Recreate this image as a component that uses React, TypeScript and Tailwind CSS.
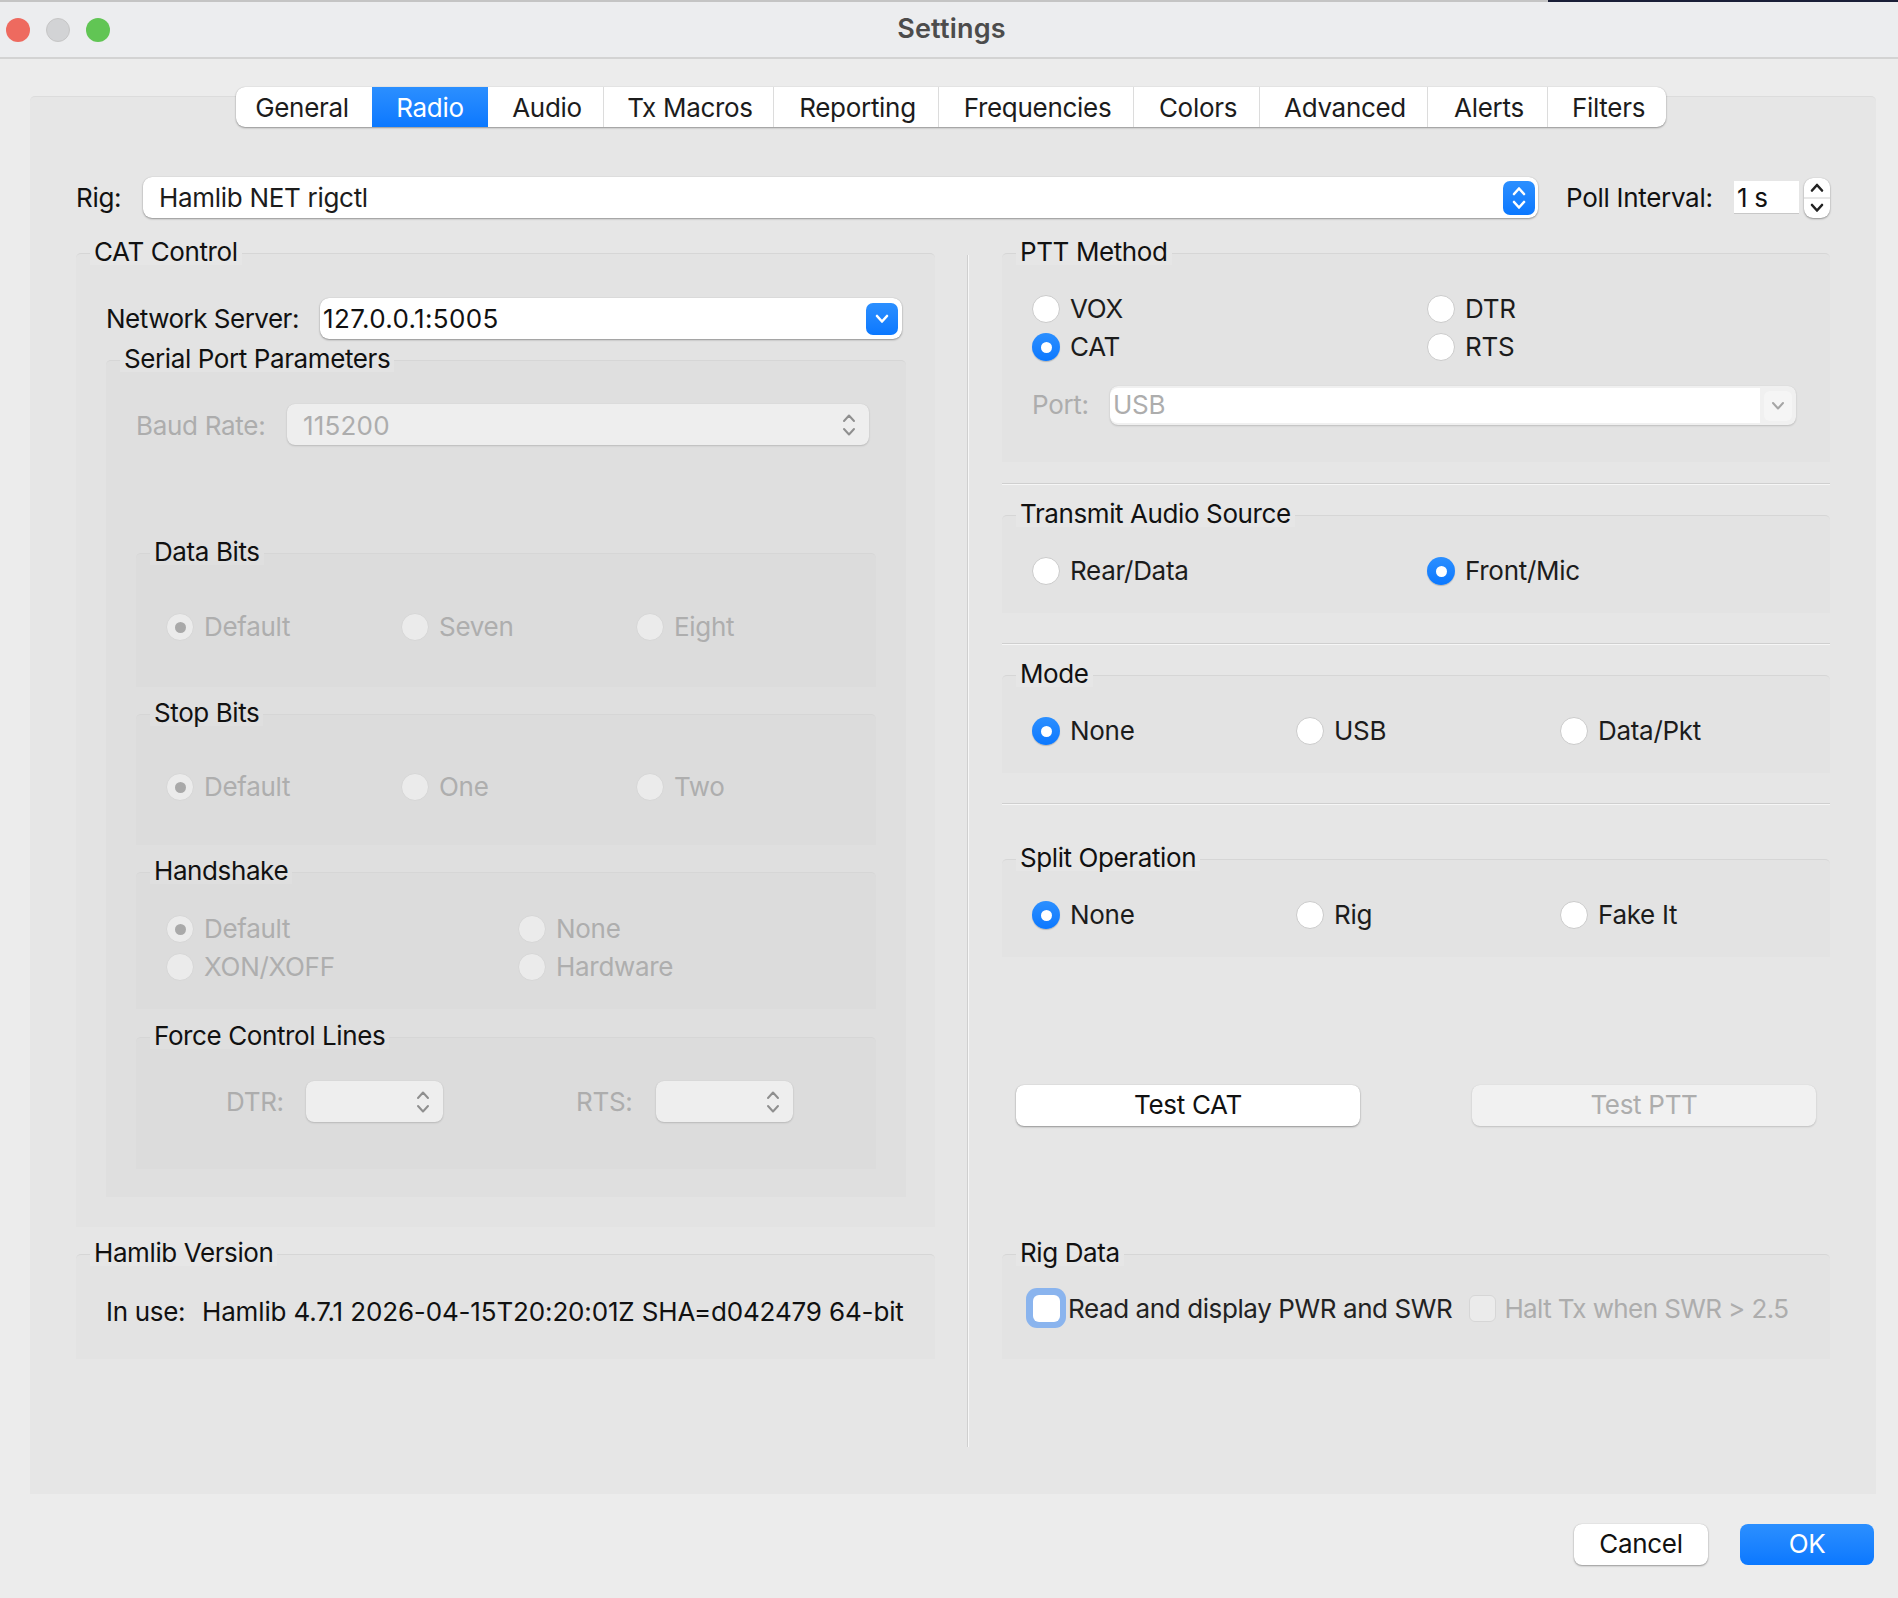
import React from 'react';

const tabs = [
  { name: 'General', w: 'w-[136px]', pad: 'pr-[4px]' },
  { name: 'Radio', w: 'w-[116px]', pad: '' },
  { name: 'Audio', w: 'w-[116px]', pad: 'pl-[3px]' },
  { name: 'Tx Macros', w: 'w-[170px]', pad: 'pl-[3px]' },
  { name: 'Reporting', w: 'w-[165px]', pad: 'pl-[3px]' },
  { name: 'Frequencies', w: 'w-[195px]', pad: 'pl-[3px]' },
  { name: 'Colors', w: 'w-[126px]', pad: 'pl-[3px]' },
  { name: 'Advanced', w: 'w-[168px]', pad: 'pl-[3px]' },
  { name: 'Alerts', w: 'w-[120px]', pad: 'pl-[3px]' },
  { name: 'Filters', w: 'w-[118px]', pad: 'pl-[3px]' },
];

const ctrlShadow = 'shadow-[0_1px_2px_rgba(0,0,0,0.35),0_0_1px_rgba(0,0,0,0.2)]';
const dimShadow = 'shadow-[0_1px_2px_rgba(0,0,0,0.16),0_0_1px_rgba(0,0,0,0.1)]';

const UpDown = ({ color = '#fff', width = 2.6 }: { color?: string; width?: number }) => (
  <svg width="16" height="26" viewBox="0 0 16 26" fill="none" stroke={color} strokeWidth={width} strokeLinecap="round" strokeLinejoin="round">
    <path d="M3 9 L8 3.5 L13 9" />
    <path d="M3 17 L8 22.5 L13 17" />
  </svg>
);

const Down = ({ color = '#fff', width = 2.6 }: { color?: string; width?: number }) => (
  <svg width="14" height="10" viewBox="0 0 14 10" fill="none" stroke={color} strokeWidth={width} strokeLinecap="round" strokeLinejoin="round">
    <path d="M2 2 L7 7.5 L12 2" />
  </svg>
);

const Radio = ({ label, checked, disabled }: { label: string; checked?: boolean; disabled?: boolean }) => (
  <div className="flex h-[38px] items-center gap-[10px]">
    {checked && !disabled ? (
      <span className="flex h-7 w-7 shrink-0 items-center justify-center rounded-full bg-gradient-to-b from-[#2b8fff] to-[#0a78ff] shadow-[0_1px_1px_rgba(0,0,0,0.2)]">
        <span className="h-[11px] w-[11px] rounded-full bg-white" />
      </span>
    ) : (
      <span
        className={`flex h-7 w-7 shrink-0 items-center justify-center rounded-full border ${
          disabled ? 'border-[#d6d6d6] bg-[#ebebeb]' : 'border-[#cbcbcb] bg-white'
        }`}
      >
        {checked && <span className="h-[11px] w-[11px] rounded-full bg-[#a9a9a9]" />}
      </span>
    )}
    <span className={`pb-[2px] ${disabled ? 'text-[#aeaeae]' : 'text-[#1c1c1c]'}`}>{label}</span>
  </div>
);

const Group = ({
  title,
  titleBg,
  bg,
  className,
  children,
}: {
  title: string;
  titleBg: string;
  bg: string;
  className: string;
  children?: React.ReactNode;
}) => (
  <div className={`relative rounded-t-[5px] border-t border-[#d6d6d6] ${bg} ${className}`}>
    <span className={`absolute left-[14px] top-[-16px] h-[27px] px-1 leading-[27px] tracking-[-0.4px] text-[#111] ${titleBg}`}>{title}</span>
    {children}
  </div>
);

const Separator = ({ className }: { className: string }) => <div className={`h-[2px] bg-[#f6f6f6] border-t border-[#cfcfcf] ${className}`} />;

const DimSelect = ({ className, value }: { className: string; value?: string }) => (
  <div className={`flex h-[41px] items-center justify-between rounded-[8px] bg-[#eeeeee] pl-[16px] pr-[12px] text-[#adadad] ${dimShadow} ${className}`}>
    <span className="pt-[1px] tracking-[0.2px]">{value}</span>
    <UpDown color="#8f8f8f" width={2} />
  </div>
);

export default function App() {
  return (
    <div className="h-[1598px] w-[1898px] overflow-hidden bg-[#ececec] text-[26px] tracking-[-0.3px] font-['Inter','Liberation_Sans',sans-serif]">
      <div className="flex h-[2px]">
        <div className="flex-1 bg-[#c4c4c4]" />
        <div className="w-[350px] bg-[#1a1f38]" />
      </div>

      {/* title bar */}
      <div className="relative flex h-[57px] items-center justify-center border-b-2 border-[#d3d3d3] bg-[#ecedef]">
        <div className="absolute left-[6px] top-[16px] flex gap-[16px]">
          <span className="h-6 w-6 rounded-full bg-[#ee6a5f]" />
          <span className="h-6 w-6 rounded-full border border-[#c6c6c6] bg-[#d2d3d5]" />
          <span className="h-6 w-6 rounded-full bg-[#61c554]" />
        </div>
        <span className="ml-[5px] text-[27px] font-semibold tracking-[0.2px] text-[#4c4c4c]">Settings</span>
      </div>

      <div className="pl-[30px] pr-[22px] pt-[28px]">
        {/* tabs */}
        <div className="relative z-10 ml-[206px] flex">
          <div className={`flex h-[40px] overflow-hidden rounded-[9px] bg-white ${ctrlShadow}`}>
            {tabs.map((t, i) => (
              <div
                key={t.name}
                className={`flex items-center justify-center pt-[1px] ${t.w} ${t.pad} ${
                  t.name === 'Radio'
                    ? 'bg-gradient-to-b from-[#2b8fff] to-[#0a78ff] text-white'
                    : `text-[#1c1c1c] ${i < tabs.length - 1 && tabs[i + 1].name !== 'Radio' ? 'border-r border-[#dcdcdc]' : ''}`
                }`}
              >
                {t.name}
              </div>
            ))}
          </div>
        </div>

        {/* tab panel */}
        <div className="-mt-[31px] h-[1398px] rounded-t-[5px] border-t border-[#dcdcdc] bg-[#e6e6e6] pl-[46px] pr-[45px] pt-[80px]">
          {/* rig row */}
          <div className="flex h-[41px] items-center whitespace-nowrap">
            <span className="w-[67px] text-[#111]">Rig:</span>
            <div className={`flex h-[41px] w-[1395px] items-center justify-between rounded-[9px] bg-white pl-[16px] pr-[3px] text-[#1c1c1c] ${ctrlShadow}`}>
              <span>Hamlib NET rigctl</span>
              <span className="flex h-[34px] w-[32px] items-center justify-center rounded-[7px] bg-gradient-to-b from-[#2b8fff] to-[#0a78ff]">
                <UpDown />
              </span>
            </div>
            <span className="ml-[28px] w-[168px] text-[#111]">Poll Interval:</span>
            <div className="flex h-[33px] w-[65px] items-center border-b border-[#c8c8c8] bg-white pl-[3px] text-[#111]">1 s</div>
            <div className={`ml-[5px] flex h-[40px] w-[26px] flex-col overflow-hidden rounded-[9px] bg-white ${ctrlShadow}`}>
              <span className="flex flex-1 rotate-180 items-center justify-center border-t border-[#d0d0d0]"><Down color="#222" /></span>
              <span className="flex flex-1 items-center justify-center"><Down color="#222" /></span>
            </div>
          </div>

          <div className="mt-[35px] flex">
            {/* left column */}
            <div className="w-[859px] shrink-0">
              <Group title="CAT Control" titleBg="bg-[#e6e6e6]" bg="bg-[#e3e3e3]" className="h-[974px] px-[30px] pt-[44px]">
                <div className="flex h-[41px] items-center">
                  <span className="w-[214px] tracking-[-0.5px] text-[#111]">Network Server:</span>
                  <div className={`flex h-[41px] w-[582px] items-center justify-between rounded-[9px] bg-white pl-[3px] pr-[4px] text-[#111] ${ctrlShadow}`}>
                    <span className="pb-[1px] tracking-[0.35px]">127.0.0.1:5005</span>
                    <span className="flex h-[32px] w-[32px] items-center justify-center rounded-[7px] bg-gradient-to-b from-[#2b8fff] to-[#0a78ff]">
                      <Down />
                    </span>
                  </div>
                </div>

                <Group title="Serial Port Parameters" titleBg="bg-[#e3e3e3]" bg="bg-[#dfdfdf]" className="mt-[21px] h-[837px] w-[800px] px-[30px] pt-[43px]">
                  <div className="flex h-[41px] items-center">
                    <span className="w-[151px] pt-[1px] text-[#adadad]">Baud Rate:</span>
                    <DimSelect className="w-[582px]" value="115200" />
                  </div>

                  <Group title="Data Bits" titleBg="bg-[#dfdfdf]" bg="bg-[#dcdcdc]" className="mt-[108px] h-[134px] w-[740px] pl-[30px] pt-[54px]">
                    <div className="grid grid-cols-[235px_235px_1fr]">
                      <Radio label="Default" checked disabled />
                      <Radio label="Seven" disabled />
                      <Radio label="Eight" disabled />
                    </div>
                  </Group>

                  <Group title="Stop Bits" titleBg="bg-[#dfdfdf]" bg="bg-[#dcdcdc]" className="mt-[27px] h-[131px] w-[740px] pl-[30px] pt-[53px]">
                    <div className="grid grid-cols-[235px_235px_1fr]">
                      <Radio label="Default" checked disabled />
                      <Radio label="One" disabled />
                      <Radio label="Two" disabled />
                    </div>
                  </Group>

                  <Group title="Handshake" titleBg="bg-[#dfdfdf]" bg="bg-[#dcdcdc]" className="mt-[27px] h-[137px] w-[740px] pl-[30px] pt-[37px]">
                    <div className="grid grid-cols-[352px_1fr]">
                      <Radio label="Default" checked disabled />
                      <Radio label="None" disabled />
                      <Radio label="XON/XOFF" disabled />
                      <Radio label="Hardware" disabled />
                    </div>
                  </Group>

                  <Group title="Force Control Lines" titleBg="bg-[#dfdfdf]" bg="bg-[#dcdcdc]" className="mt-[28px] h-[132px] w-[740px] pl-[90px] pt-[43px]">
                    <div className="flex items-center">
                      <span className="w-[80px] text-[#adadad]">DTR:</span>
                      <DimSelect className="w-[137px]" />
                      <span className="ml-[133px] w-[80px] text-[#adadad]">RTS:</span>
                      <DimSelect className="w-[137px]" />
                    </div>
                  </Group>
                </Group>
              </Group>

              <Group title="Hamlib Version" titleBg="bg-[#e6e6e6]" bg="bg-[#e3e3e3]" className="mt-[27px] h-[105px] pl-[30px] pt-[37px]">
                <div className="flex text-[#111]">
                  <span className="w-[96px]">In use:</span>
                  <span className="tracking-[-0.15px]">Hamlib 4.7.1 2026-04-15T20:20:01Z SHA=d042479 64-bit</span>
                </div>
              </Group>
            </div>

            {/* divider */}
            <div className="ml-[32px] mt-[2px] h-[1192px] w-[2px] shrink-0 bg-[#f7f7f7] border-l border-[#cfcfcf]" />

            {/* right column */}
            <div className="ml-[33px] w-[828px] shrink-0">
              <Group title="PTT Method" titleBg="bg-[#e6e6e6]" bg="bg-[#e3e3e3]" className="h-[209px] pl-[30px] pt-[36px]">
                <div className="grid grid-cols-[395px_1fr]">
                  <Radio label="VOX" />
                  <Radio label="DTR" />
                  <Radio label="CAT" checked />
                  <Radio label="RTS" />
                </div>
                <div className="mt-[20px] flex h-[39px] items-center">
                  <span className="w-[78px] pb-[2px] text-[#adadad]">Port:</span>
                  <div className={`flex h-[39px] w-[686px] items-center justify-between rounded-[8px] bg-[#f0f0f0] pr-[4px] text-[#adadad] ${dimShadow}`}>
                    <span className="flex h-[35px] flex-1 items-center rounded-l-[8px] bg-white pb-[2px] pl-[3px]">USB</span>
                    <span className="ml-[4px] flex h-[30px] w-[28px] items-center justify-center rounded-[6px] bg-[#f5f5f5]">
                      <Down color="#a5a5a5" width={2} />
                    </span>
                  </div>
                </div>
              </Group>

              <Separator className="mt-[21px]" />

              <Group title="Transmit Audio Source" titleBg="bg-[#e6e6e6]" bg="bg-[#e3e3e3]" className="mt-[30px] h-[98px] pl-[30px] pt-[36px]">
                <div className="grid grid-cols-[395px_1fr]">
                  <Radio label="Rear/Data" />
                  <Radio label="Front/Mic" checked />
                </div>
              </Group>

              <Separator className="mt-[30px]" />

              <Group title="Mode" titleBg="bg-[#e6e6e6]" bg="bg-[#e3e3e3]" className="mt-[30px] h-[98px] pl-[30px] pt-[36px]">
                <div className="grid grid-cols-[264px_264px_1fr]">
                  <Radio label="None" checked />
                  <Radio label="USB" />
                  <Radio label="Data/Pkt" />
                </div>
              </Group>

              <Separator className="mt-[30px]" />

              <Group title="Split Operation" titleBg="bg-[#e6e6e6]" bg="bg-[#e3e3e3]" className="mt-[54px] h-[98px] pl-[30px] pt-[36px]">
                <div className="grid grid-cols-[264px_264px_1fr]">
                  <Radio label="None" checked />
                  <Radio label="Rig" />
                  <Radio label="Fake It" />
                </div>
              </Group>

              <div className="mt-[128px] flex justify-between pl-[14px] pr-[14px]">
                <div className={`flex h-[41px] w-[344px] items-center justify-center rounded-[8px] bg-white pb-[2px] text-[#111] ${ctrlShadow}`}>Test CAT</div>
                <div className={`flex h-[41px] w-[344px] items-center justify-center rounded-[8px] bg-[#f1f1f1] pb-[2px] text-[#adadad] ${dimShadow}`}>Test PTT</div>
              </div>

              <Group title="Rig Data" titleBg="bg-[#e6e6e6]" bg="bg-[#e3e3e3]" className="mt-[128px] h-[105px] pl-[24px] pt-[33px]">
                <div className="flex items-center">
                  <span className="flex h-[40px] w-[40px] items-center justify-center rounded-[11px] bg-[#8ab4ee]">
                    <span className="h-[27px] w-[27px] rounded-[6px] bg-white" />
                  </span>
                  <span className="ml-[2px] tracking-[-0.4px] text-[#222]">Read and display PWR and SWR</span>
                  <span className="ml-[17px] h-[27px] w-[27px] rounded-[6px] border border-[#d6d6d6] bg-[#ebebeb]" />
                  <span className="ml-[8px] tracking-[-0.6px] text-[#adadad]">Halt Tx when SWR &gt; 2.5</span>
                </div>
              </Group>
            </div>
          </div>
        </div>

        {/* dialog buttons */}
        <div className="mt-[30px] flex justify-end gap-[32px] pr-[2px]">
          <div className={`flex h-[41px] w-[134px] items-center justify-center rounded-[8px] bg-white pb-[2px] text-[#111] ${ctrlShadow}`}>Cancel</div>
          <div className="flex h-[41px] w-[134px] items-center justify-center rounded-[8px] bg-gradient-to-b from-[#2b8fff] to-[#0a78ff] pb-[2px] text-white">OK</div>
        </div>
      </div>
    </div>
  );
}
